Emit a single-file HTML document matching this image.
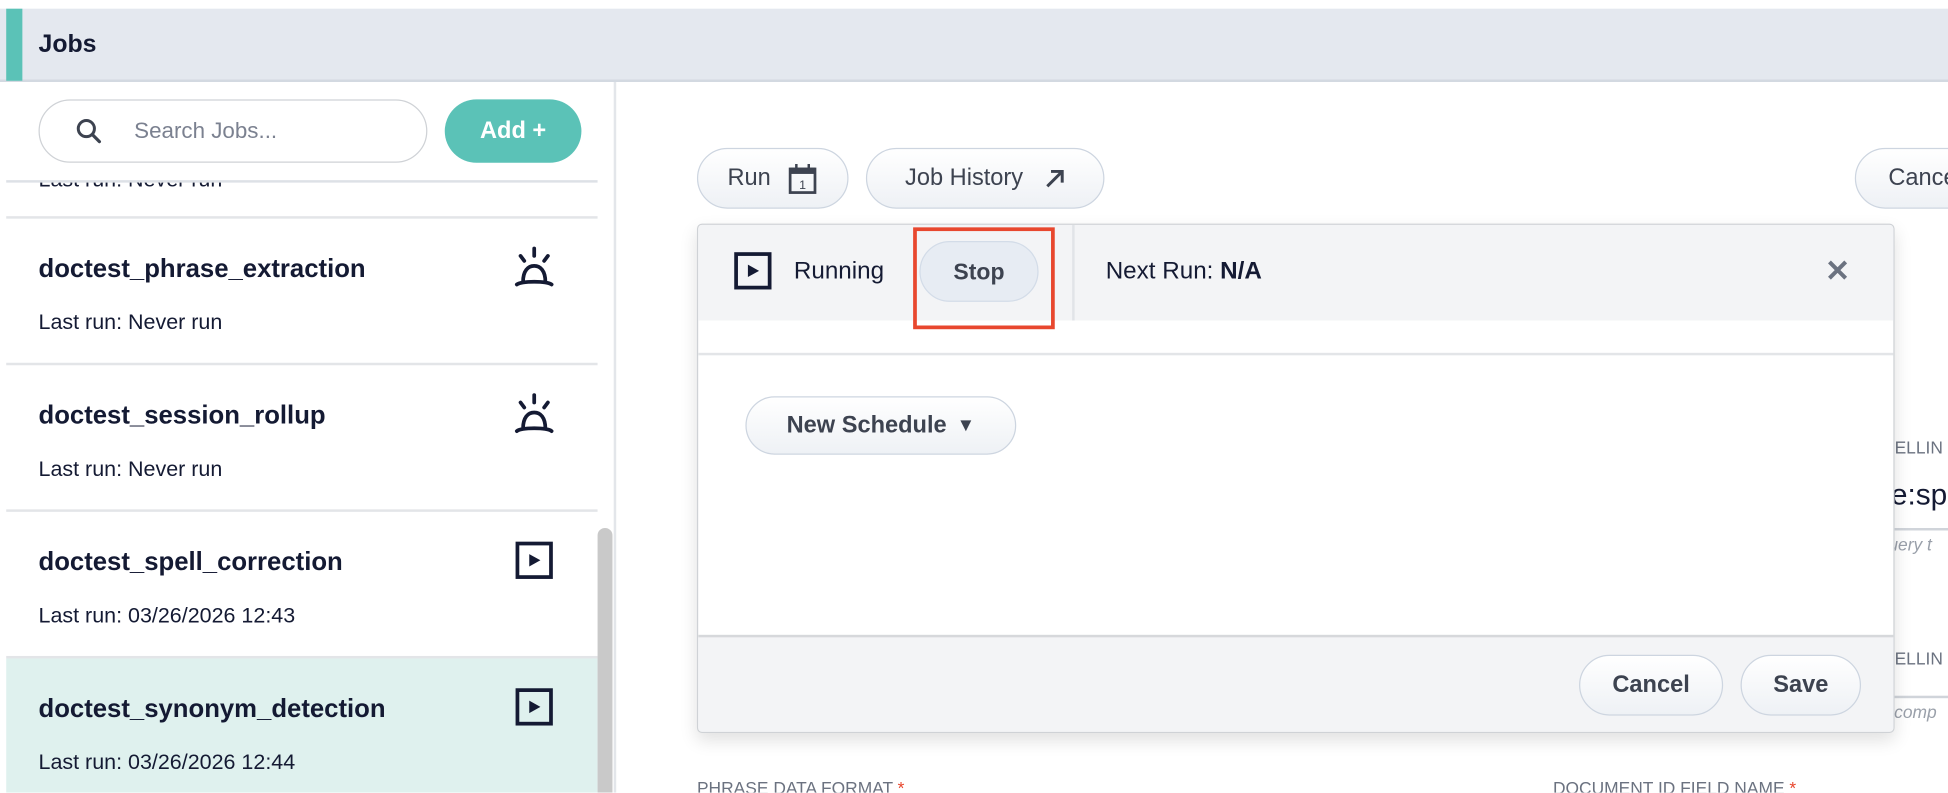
<!DOCTYPE html>
<html><head><meta charset="utf-8"><style>
html,body{margin:0;padding:0;width:1948px;height:792px;overflow:hidden;background:#fff;font-family:"Liberation Sans",sans-serif;}
#w{position:absolute;left:0;top:0;width:1568px;height:638px;transform:scale(1.24235);transform-origin:0 0;overflow:hidden;background:#fff;}
.a{position:absolute;}
.pill{position:absolute;border:1.5px solid #cdd5e0;border-radius:26px;background:linear-gradient(#fff,#eef1f5);box-sizing:border-box;color:#3d4350;font-size:19px;display:flex;align-items:center;justify-content:center;}
.t{font-weight:bold;font-size:20.7px;color:#141a33;}
.s{font-size:17.3px;color:#141a33;}
.play{position:absolute;width:30px;height:30px;box-sizing:border-box;border:3px solid #141a33;}
.play:after{content:"";position:absolute;left:8px;top:7px;border-left:9px solid #141a33;border-top:5px solid transparent;border-bottom:5px solid transparent;}
.line{position:absolute;height:2px;background:#e3e5e8;}
</style></head><body><div id="w">
<div class="a" style="left:0;top:7px;width:1568px;height:57px;background:#e4e8ef;border-bottom:2px solid #d3d9e1;"></div>
<div class="a" style="left:5px;top:7px;width:13px;height:58px;background:#5bc2b7;"></div>
<div class="a" style="left:31px;top:25px;font-size:20px;font-weight:bold;color:#141a33;">Jobs</div>
<div class="a" style="left:494px;top:66px;width:2px;height:572px;background:#e3e6ea;"></div>
<div class="a" style="left:31px;top:80px;width:313px;height:51px;border:1.5px solid #cfd2d6;border-radius:26px;box-sizing:border-box;"></div>
<svg class="a" style="left:60px;top:94px" width="24" height="24" viewBox="0 0 24 24"><circle cx="9.5" cy="9.5" r="6.5" fill="none" stroke="#3d4350" stroke-width="2.4"/><path d="M14.5 14.5L20 20" stroke="#3d4350" stroke-width="2.6" stroke-linecap="round"/></svg>
<div class="a" style="left:108px;top:95px;font-size:18px;color:#7b8190;">Search Jobs...</div>
<div class="a" style="left:358px;top:80px;width:110px;height:51px;border-radius:26px;background:#5bc2b7;color:#fff;font-weight:bold;font-size:19px;display:flex;align-items:center;justify-content:center;">Add +</div>
<div class="a" style="left:5px;top:146px;width:476px;height:28px;overflow:hidden;"><div class="a s" style="left:26px;top:-12px;">Last run: Never run</div></div>
<div class="a" style="left:5px;top:145px;width:476px;height:2px;background:#dde1e6;"></div>
<div class="line" style="left:5px;top:174px;width:476px;"></div>
<div class="line" style="left:5px;top:292px;width:476px;"></div>
<div class="line" style="left:5px;top:410px;width:476px;"></div>
<div class="line" style="left:5px;top:528px;width:476px;"></div>
<div class="a" style="left:5px;top:530px;width:476px;height:108px;background:#dff1ee;"></div>
<div class="a" style="left:481px;top:425px;width:12px;height:213px;background:#c9c9c9;border-radius:6px 6px 0 0;"></div>
<div class="a t" style="left:31px;top:205px;">doctest_phrase_extraction</div>
<div class="a s" style="left:31px;top:249px;">Last run: Never run</div>
<div class="a t" style="left:31px;top:323px;">doctest_session_rollup</div>
<div class="a s" style="left:31px;top:367px;">Last run: Never run</div>
<div class="a t" style="left:31px;top:441px;">doctest_spell_correction</div>
<div class="a s" style="left:31px;top:485px;">Last run: 03/26/2026 12:43</div>
<div class="a t" style="left:31px;top:559px;">doctest_synonym_detection</div>
<div class="a s" style="left:31px;top:603px;">Last run: 03/26/2026 12:44</div>
<svg class="a" style="left:412px;top:198px" width="36" height="34" viewBox="0 0 36 34"><path d="M18 2v6M7 8l3 4M29 8l-3 4M9 29c0-9 4-13 9-13s9 4 9 13M4 31c4-3 24-3 28 0" fill="none" stroke="#141a33" stroke-width="3" stroke-linecap="round"/></svg>
<svg class="a" style="left:412px;top:316px" width="36" height="34" viewBox="0 0 36 34"><path d="M18 2v6M7 8l3 4M29 8l-3 4M9 29c0-9 4-13 9-13s9 4 9 13M4 31c4-3 24-3 28 0" fill="none" stroke="#141a33" stroke-width="3" stroke-linecap="round"/></svg>
<div class="play" style="left:415px;top:436px;"></div>
<div class="play" style="left:415px;top:554px;"></div>
<!-- right -->
<div class="pill" style="left:561px;top:119px;width:122px;height:49px;">Run<svg style="margin-left:14px" width="24" height="26" viewBox="0 0 24 26"><rect x="2" y="5" width="20" height="19" fill="none" stroke="#3d4350" stroke-width="2.2"/><rect x="2" y="4" width="20" height="5" fill="#3d4350"/><path d="M7 1v5M17 1v5" stroke="#3d4350" stroke-width="2"/><text x="12" y="21" font-size="10" text-anchor="middle" fill="#3d4350" font-family="Liberation Sans">1</text></svg></div>
<div class="pill" style="left:697px;top:119px;width:192px;height:49px;">Job History<svg style="margin-left:16px" width="18" height="18" viewBox="0 0 18 18"><path d="M3 15L15 3M6 3h9v9" fill="none" stroke="#3d4350" stroke-width="2.4"/></svg></div>
<div class="pill" style="left:1493px;top:119px;width:120px;height:49px;justify-content:flex-start;padding-left:26px;">Cancel</div>
<div class="a" style="left:1525px;top:352px;font-size:14px;color:#6b7280;">ELLIN</div>
<div class="a" style="left:1522px;top:385px;font-size:24px;color:#141a33;">e:spe</div>
<div class="a" style="left:1525px;top:425px;width:50px;height:2px;background:#d0d4da;"></div>
<div class="a" style="left:1520px;top:430px;font-size:14px;color:#9aa0aa;font-style:italic;">uery t</div>
<div class="a" style="left:1525px;top:522px;font-size:14px;color:#6b7280;">ELLIN</div>
<div class="a" style="left:1525px;top:560px;width:50px;height:2px;background:#d0d4da;"></div>
<div class="a" style="left:1520px;top:565px;font-size:14px;color:#9aa0aa;font-style:italic;">-comp</div>
<div class="a" style="left:561px;top:626px;font-size:14px;color:#6b7280;">PHRASE DATA FORMAT <span style="color:#e8472e">*</span></div>
<div class="a" style="left:1250px;top:626px;font-size:14px;color:#6b7280;">DOCUMENT ID FIELD NAME <span style="color:#e8472e">*</span></div>
<!-- modal -->
<div class="a" style="left:561px;top:180px;width:964px;height:410px;background:#fff;border:1.5px solid #cfd2d6;border-radius:4px;box-sizing:border-box;box-shadow:0 6px 14px rgba(0,0,0,0.12);overflow:hidden;">
 <div class="a" style="left:0;top:0;width:964px;height:77px;background:#f3f4f6;"></div>
 <div class="a" style="left:301px;top:0;width:2px;height:77px;background:#e1e4e8;"></div>
 <div class="a" style="left:0;top:103px;width:964px;height:2px;background:#e3e5e8;"></div>
 <div class="a" style="left:0;top:330px;width:964px;height:80px;background:#f3f4f6;border-top:2px solid #d6d8db;"></div>
</div>
<div class="play" style="left:591px;top:203px;"></div>
<div class="a" style="left:639px;top:207px;font-size:19.5px;color:#141a33;">Running</div>
<div class="pill" style="left:740px;top:194px;width:96px;height:49px;background:#e7ecf3;border-color:#d3dce8;font-size:18.5px;font-weight:bold;">Stop</div>
<div class="a" style="left:735px;top:183px;width:114px;height:82px;border:3px solid #e8472e;box-sizing:border-box;"></div>
<div class="a" style="left:890px;top:207px;font-size:19.5px;color:#141a33;">Next Run: <b>N/A</b></div>
<div class="a" style="left:1469px;top:204px;font-size:24px;font-weight:bold;color:#6b7280;">✕</div>
<div class="pill" style="left:600px;top:319px;width:218px;height:47px;font-weight:bold;">New Schedule<span style="margin-left:8px;font-size:15px;">▼</span></div>
<div class="pill" style="left:1271px;top:527px;width:116px;height:49px;font-weight:bold;">Cancel</div>
<div class="pill" style="left:1401px;top:527px;width:97px;height:49px;font-weight:bold;">Save</div>
</div></body></html>
